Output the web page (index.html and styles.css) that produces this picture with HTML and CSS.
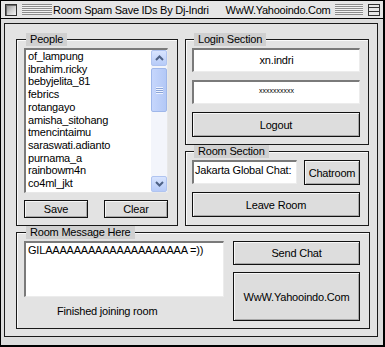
FILE: index.html
```html
<!DOCTYPE html>
<html>
<head>
<meta charset="utf-8">
<link rel="stylesheet" href="styles.css">
</head>
<body>
<div class="window">
  <div class="titlebar">
    <span class="closebox"></span>
    <span class="stripes stripes-left"></span>
    <span class="title">Room Spam Save IDs By Dj-Indri&nbsp;&nbsp;&nbsp;&nbsp;&nbsp; WwW.Yahooindo.Com</span>
    <span class="stripes stripes-right"></span>
    <span class="zoombox"><span class="zoombar"></span><span class="zoombar"></span></span>
  </div>
  <div class="frame">
    <div class="panel">
      <div class="toprow">
        <fieldset class="group people">
          <legend>People</legend>
          <div class="listbox">
            <ul class="items">
              <li>of_lampung</li>
              <li>ibrahim.ricky</li>
              <li>bebyjelita_81</li>
              <li>febrics</li>
              <li>rotangayo</li>
              <li>amisha_sitohang</li>
              <li>tmencintaimu</li>
              <li>saraswati.adianto</li>
              <li>purnama_a</li>
              <li>rainbowm4n</li>
              <li>co4ml_jkt</li>
            </ul>
            <div class="scrollbar">
              <div class="sb-btn"><svg width="9" height="6" viewBox="0 0 9 6"><path d="M1 5 L4.5 1.5 L8 5" fill="none" stroke="#4d6185" stroke-width="2"/></svg></div>
              <div class="sb-track">
                <div class="sb-thumb"><span class="grip"></span></div>
              </div>
              <div class="sb-btn"><svg width="9" height="6" viewBox="0 0 9 6"><path d="M1 1 L4.5 4.5 L8 1" fill="none" stroke="#4d6185" stroke-width="2"/></svg></div>
            </div>
          </div>
          <div class="btnrow">
            <button class="btn btn-small">Save</button>
            <button class="btn btn-small">Clear</button>
          </div>
        </fieldset>
        <div class="rightcol">
          <fieldset class="group login">
            <legend>Login Section</legend>
            <div class="field centered">xn.indri</div>
            <div class="field centered password">xxxxxxxxxx</div>
            <button class="btn btn-wide">Logout</button>
          </fieldset>
          <fieldset class="group room">
            <legend>Room Section</legend>
            <div class="roomrow">
              <div class="field roomname">Jakarta Global Chat:</div>
              <button class="btn btn-chat">Chatroom</button>
            </div>
            <button class="btn btn-wide">Leave Room</button>
          </fieldset>
        </div>
      </div>
      <fieldset class="group message">
        <legend>Room Message Here</legend>
        <div class="msgleft">
          <div class="textarea">GILAAAAAAAAAAAAAAAAAAAA =))</div>
          <div class="status">Finished joining room</div>
        </div>
        <div class="msgright">
          <button class="btn btn-send">Send Chat</button>
          <button class="btn btn-site">WwW.Yahooindo.Com</button>
        </div>
      </fieldset>
    </div>
  </div>
</div>
</body>
</html>
```
FILE: styles.css
```css
* { box-sizing: border-box; }
html, body { margin: 0; padding: 0; }
body {
  width: 385px;
  height: 347px;
  overflow: hidden;
  background: #d8d8d8;
  font-family: "Liberation Sans", Arial, sans-serif;
  font-size: 11px;
  letter-spacing: -0.2px;
  color: #000;
}
.window {
  width: 385px;
  height: 347px;
  border-style: solid;
  border-color: #000;
  border-width: 1px 2px 2px 1px;
  background: #dedede;
  display: flex;
  flex-direction: column;
}
.titlebar {
  height: 18px;
  flex: none;
  border-bottom: 1px solid #000;
  background: #e6e6e6;
  display: flex;
  align-items: center;
  padding: 0 3px 0 4px;
}
.closebox {
  width: 12px;
  height: 12px;
  border: 1px solid #333;
  background: linear-gradient(135deg, #8c8c8c 0%, #cfcfcf 55%, #f4f4f4 100%);
  box-shadow: inset 1px 1px 0 #6a6a6a;
  flex: none;
}
.stripes {
  height: 11px;
  background: repeating-linear-gradient(to bottom, #8c8c8c 0 1px, #f2f2f2 1px 2px);
}
.stripes-left { width: 30px; margin-left: 5px; flex: none; }
.title {
  width: 280px;
  flex: none;
  margin-left: 1px;
  white-space: nowrap;
  overflow: hidden;
  font-size: 11px;
  letter-spacing: -0.25px;
  line-height: 14px;
}
.stripes-right { flex: 1; margin-left: 2px; margin-right: 5px; }
.zoombox {
  width: 12px;
  height: 12px;
  border: 1px solid #333;
  background: #e8e8e8;
  flex: none;
  display: flex;
  flex-direction: column;
  justify-content: space-evenly;
}
.zoombar { height: 1px; background: #333; }
.frame {
  flex: 1;
  padding: 4px 6px 8px 3px;
  background: #dcdcdc;
  display: flex;
}
.panel {
  flex: 1;
  border: 1px solid #1a1a1a;
  background: #e3e3e3;
  padding: 9px 7px 7px 11px;
  display: flex;
  flex-direction: column;
}
.toprow {
  display: flex;
  gap: 7px;
  height: 193px;
}
.group {
  margin: 0;
  min-width: 0;
  border: 1px solid #1a1a1a;
  box-shadow: inset 1px 1px 0 #fafafa;
}
.group legend {
  margin-left: 2px;
  padding: 0 4px;
  height: 13px;
  line-height: 13px;
  background: #d0d0d0;
  font-size: 11px;
}
.people {
  width: 162px;
  height: 193px;
  padding: 2px 9px 7px 7px;
  display: flex;
  flex-direction: column;
  gap: 7px;
}
.listbox {
  height: 145px;
  background: #fff;
  border-top: 2px solid #7a7a7a;
  border-left: 2px solid #7a7a7a;
  border-right: 1px solid #e8e8e8;
  border-bottom: 1px solid #e8e8e8;
  display: flex;
}
.items {
  list-style: none;
  margin: 0;
  padding: 0 0 0 2px;
  flex: 1;
  line-height: 12.7px;
  font-size: 11px;
}
.scrollbar {
  width: 16px;
  display: flex;
  flex-direction: column;
  background: #f3f5fb;
}
.sb-btn {
  height: 16px;
  flex: none;
  background: linear-gradient(#d8e4fe, #b7cbf8);
  border: 1px solid #b0c4f0;
  border-radius: 2px;
  display: flex;
  align-items: center;
  justify-content: center;
}
.sb-track {
  flex: 1;
  padding: 2px 0;
}
.sb-thumb {
  height: 44px;
  background: linear-gradient(to right, #c6d6fc, #b3c8f6);
  border: 1px solid #9fb7ea;
  border-radius: 2px;
  display: flex;
  align-items: center;
  justify-content: center;
}
.grip {
  width: 7px;
  height: 7px;
  background: repeating-linear-gradient(to bottom, #eef3ff 0 1px, #8aa4d8 1px 2px);
}
.btnrow {
  display: flex;
  justify-content: space-between;
}
.btn {
  margin: 0;
  padding: 0;
  font-family: "Liberation Sans", Arial, sans-serif;
  font-size: 11px;
  letter-spacing: -0.2px;
  color: #000;
  background: #dddddd;
  border: 1px solid #111;
  box-shadow: inset 1px 1px 0 #f6f6f6, inset -1px -1px 0 #a8a8a8;
  border-radius: 0;
}
.btn-small { width: 64px; height: 18px; }
.rightcol {
  width: 184px;
  display: flex;
  flex-direction: column;
}
.login {
  height: 112px;
  padding: 2px 8px 7px 6px;
  display: flex;
  flex-direction: column;
  gap: 8px;
}
.field {
  height: 24px;
  background: #fff;
  border-top: 2px solid #7a7a7a;
  border-left: 2px solid #7a7a7a;
  border-right: 1px solid #ececec;
  border-bottom: 1px solid #ececec;
  line-height: 20px;
  white-space: nowrap;
  overflow: hidden;
}
.centered { text-align: center; }
.password { font-size: 7px; letter-spacing: 0; line-height: 18px; }
.btn-wide { width: 168px; height: 25px; flex: none; }
.room {
  height: 81px;
  padding: 2px 8px 8px 6px;
  display: flex;
  flex-direction: column;
  gap: 7px;
}
.roomrow {
  display: flex;
  gap: 7px;
  align-items: flex-start;
}
.roomname {
  width: 105px;
  padding-left: 1px;
  line-height: 16px;
}
.btn-chat { width: 56px; height: 25px; }
.message {
  height: 103px;
  padding: 2px 9px 7px 7px;
  display: flex;
  gap: 9px;
}
.msgleft {
  width: 200px;
  display: flex;
  flex-direction: column;
}
.textarea {
  height: 56px;
  background: #fff;
  border-top: 2px solid #7a7a7a;
  border-left: 2px solid #7a7a7a;
  border-right: 1px solid #ececec;
  border-bottom: 1px solid #ececec;
  padding: 1px 0 0 2px;
  line-height: 13px;
  white-space: nowrap;
  overflow: hidden;
}
.status {
  margin: 8px 0 0 33px;
  line-height: 13px;
}
.msgright {
  width: 127px;
  display: flex;
  flex-direction: column;
  gap: 7px;
}
.btn-send { height: 24px; }
.btn-site { height: 49px; }
```
